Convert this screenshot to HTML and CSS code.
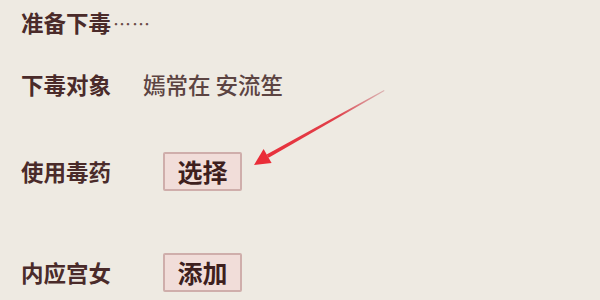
FILE: index.html
```html
<!DOCTYPE html>
<html lang="zh">
<head>
<meta charset="utf-8">
<link rel="stylesheet" href="styles.css">
</head>
<body>
<div class="page">
  <div class="row row-title"><span class="label">准备下毒</span><span class="dots">……</span></div>
  <div class="row row-target"><span class="label">下毒对象</span><span class="value">嫣常在 安流笙</span></div>
  <div class="row row-poison"><span class="label">使用毒药</span><span class="btn">选择</span></div>
  <div class="row row-maid"><span class="label">内应宫女</span><span class="btn">添加</span></div>
  <svg class="arrow" width="600" height="300" viewBox="0 0 600 300">
    <defs>
      <linearGradient id="ag" x1="384" y1="90" x2="252" y2="165" gradientUnits="userSpaceOnUse">
        <stop offset="0" stop-color="#c97a80" stop-opacity="0.5"/>
        <stop offset="0.35" stop-color="#e0404a"/>
        <stop offset="1" stop-color="#ea2d38"/>
      </linearGradient>
    </defs>
    <polygon points="384,90 384.5,91 268.6,157.8 266.6,154.4" fill="url(#ag)"/>
    <polygon points="254,165 263.6,149.1 271.6,163.1" fill="#ea2d38"/>
  </svg>
</div>
</body>
</html>
```
FILE: styles.css
```css
html, body {
  margin: 0;
  padding: 0;
}
body {
  background: #eeeae2;
  width: 600px;
  height: 300px;
  overflow: hidden;
}
.page {
  position: relative;
  width: 600px;
  height: 300px;
  display: flex;
  flex-direction: column;
  padding-left: 21px;
  box-sizing: border-box;
  font-family: "Noto Sans CJK SC", "Noto Sans", sans-serif;
  color: #4a2b2a;
}
.row {
  display: flex;
  align-items: center;
  height: 44px;
}
.label {
  font-size: 22.5px;
  font-weight: 700;
}
.dots {
  font-size: 18px;
  font-weight: 400;
  color: #6a4a48;
  letter-spacing: 1px;
  margin-left: 2px;
  position: relative;
  top: 1px;
}
.row-target {
  margin-top: 18px;
}
.value {
  font-size: 22.5px;
  font-weight: 500;
  color: #5c4442;
  margin-left: 32px;
}
.row-poison {
  margin-top: 43px;
}
.row-maid {
  margin-top: 57px;
}
.btn {
  margin-left: 52px;
  width: 79px;
  height: 39px;
  box-sizing: border-box;
  display: flex;
  align-items: center;
  justify-content: center;
  font-size: 25px;
  font-weight: 700;
  color: #3e1f1e;
  background: #f1ddd9;
  border: 2px solid #cfaeab;
  border-radius: 2px;
}
.arrow {
  position: absolute;
  left: 0;
  top: 0;
  pointer-events: none;
}
```
